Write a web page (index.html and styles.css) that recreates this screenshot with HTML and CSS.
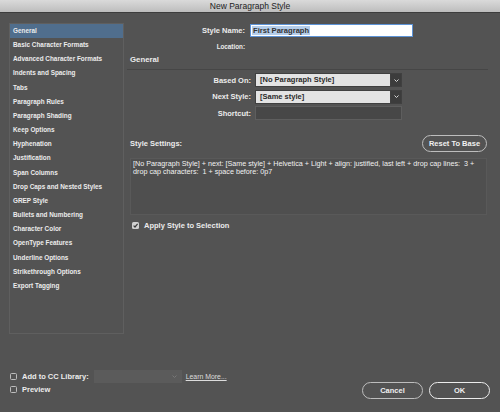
FILE: index.html
```html
<!DOCTYPE html>
<html lang="en">
<head>
  <meta charset="UTF-8">
  <title>New Paragraph Style</title>
  <link rel="stylesheet" href="styles.css">
</head>
<body>

<div class="window">
  <div class="titlebar">New Paragraph Style</div>

  <div class="top">
    <ul class="nav">
      <li class="active">General</li>
      <li>Basic Character Formats</li>
      <li>Advanced Character Formats</li>
      <li>Indents and Spacing</li>
      <li>Tabs</li>
      <li>Paragraph Rules</li>
      <li>Paragraph Shading</li>
      <li>Keep Options</li>
      <li>Hyphenation</li>
      <li>Justification</li>
      <li>Span Columns</li>
      <li>Drop Caps and Nested Styles</li>
      <li>GREP Style</li>
      <li>Bullets and Numbering</li>
      <li>Character Color</li>
      <li>OpenType Features</li>
      <li>Underline Options</li>
      <li>Strikethrough Options</li>
      <li>Export Tagging</li>
    </ul>

    <div class="pane">
      <div class="form form-name">
        <label>Style Name:</label>
        <div class="text-input focused"><span class="selection">First Paragraph</span></div>
        <label class="small">Location:</label>
        <span></span>
      </div>

      <div class="section-title">General</div>
      <div class="rule"></div>

      <div class="form form-general">
        <label>Based On:</label>
        <div class="select">
          <span class="value">[No Paragraph Style]</span>
          <span class="arrow"><svg width="5" height="3" viewBox="0 0 5 3"><path d="M0.5 0.5 L2.5 2.5 L4.5 0.5" stroke="#d8d8d8" stroke-width="1" fill="none"/></svg></span>
        </div>
        <label>Next Style:</label>
        <div class="select">
          <span class="value">[Same style]</span>
          <span class="arrow"><svg width="5" height="3" viewBox="0 0 5 3"><path d="M0.5 0.5 L2.5 2.5 L4.5 0.5" stroke="#d8d8d8" stroke-width="1" fill="none"/></svg></span>
        </div>
        <label>Shortcut:</label>
        <div class="dark-input"></div>
      </div>

      <div class="settings-head">
        <span class="label">Style Settings:</span>
        <button class="pill reset">Reset To Base</button>
      </div>
      <div class="settings-box">
        [No Paragraph Style] + next: [Same style] + Helvetica + Light + align: justified, last left + drop cap lines:&nbsp; 3 +<br>
        drop cap characters:&nbsp; 1 + space before: 0p7
      </div>

      <div class="check-row apply">
        <span class="box checked"><svg width="7" height="7" viewBox="0 0 7 7"><path d="M1.6 3.6 L3 5 L5.6 1.8" stroke="#3a3a3a" stroke-width="1.2" fill="none"/></svg></span>
        <span>Apply Style to Selection</span>
      </div>
    </div>
  </div>

  <div class="footer">
    <div class="footer-left">
      <div class="check-row">
        <span class="box"></span>
        <span>Add to CC Library:</span>
        <div class="lib-select"><svg width="5" height="3" viewBox="0 0 5 3"><path d="M0.5 0.5 L2.5 2.5 L4.5 0.5" stroke="#777" stroke-width="1" fill="none"/></svg></div>
        <a class="learn">Learn More...</a>
      </div>
      <div class="check-row">
        <span class="box"></span>
        <span>Preview</span>
      </div>
    </div>
    <div class="buttons">
      <button class="pill">Cancel</button>
      <button class="pill default">OK</button>
    </div>
  </div>
</div>

</body>
</html>
```

FILE: styles.css
```css
* {
  margin: 0;
  padding: 0;
  box-sizing: border-box;
}
body {
  width: 500px;
  height: 412px;
  overflow: hidden;
  background-color: #535353;
  color: #ececec;
  font-family: "Liberation Sans", Arial, sans-serif;
  font-size: 7.5px;
  font-weight: bold;
}
.window {
  height: 412px;
  display: flex;
  flex-direction: column;
}
.titlebar {
  height: 13px;
  line-height: 12px;
  text-align: center;
  font-size: 8.5px;
  font-weight: normal;
  color: #222;
  background: linear-gradient(#dadada, #bdbdbd);
  border-bottom: 1px solid #3d3d3d;
}
.top {
  display: flex;
  gap: 3px;
  padding: 10px 0 0 9px;
}

/* left list */
.nav {
  list-style: none;
  width: 115px;
  height: 311px;
  border: 1px solid #5f5f5f;
  font-size: 6.4px;
}
.nav li {
  height: 14.17px;
  line-height: 14.17px;
  padding-left: 3px;
  white-space: nowrap;
}
.nav li.active {
  background-color: #506e8d;
}

/* right pane */
.pane {
  width: 361px;
  display: flex;
  flex-direction: column;
}
.form {
  display: grid;
  align-items: center;
}
.form label {
  text-align: right;
}
.form-name {
  margin-top: 1px;
  grid-template-columns: 118px 163px;
  grid-template-rows: 13px 12px;
  column-gap: 5px;
  row-gap: 3px;
}
.form-name .small {
  font-size: 6.3px;
}
.text-input {
  height: 13px;
  background-color: #fff;
  border: 1px solid #5d93d6;
  padding: 0 1px;
  display: flex;
  align-items: center;
}
.selection {
  background-color: #b4cdea;
  color: #333;
  font-size: 7.6px;
  line-height: 9px;
  padding: 0 1px;
}
.section-title {
  margin-top: 2px;
  height: 12px;
  line-height: 12px;
  padding-left: 3px;
  font-size: 7.8px;
}
.rule {
  margin-top: 3px;
  height: 1px;
  background-color: #464646;
}
.form-general {
  margin-top: 3px;
  grid-template-columns: 124px 147px;
  grid-auto-rows: 14px;
  column-gap: 4px;
  row-gap: 2.5px;
}
.select {
  height: 100%;
  display: flex;
  gap: 1px;
  border: 1px solid #404040;
  background-color: #404040;
}
.select .value {
  flex: 1;
  background-color: #e3e3e3;
  color: #2a2a2a;
  padding-left: 4px;
  line-height: 12px;
}
.select .arrow {
  width: 10px;
  display: flex;
  align-items: center;
  justify-content: center;
  background-color: #3c3c3c;
}
.dark-input {
  height: 100%;
  background-color: #474747;
  border: 1px solid #5e5e5e;
}
.settings-head {
  margin-top: 15px;
  display: flex;
  justify-content: space-between;
  align-items: center;
  padding: 0 1px 0 3px;
}
.pill {
  height: 17px;
  width: 61px;
  border: 1.5px solid #bdbdbd;
  border-radius: 9px;
  background: transparent;
  color: #f0f0f0;
  font-family: "Liberation Sans", Arial, sans-serif;
  font-size: 7.5px;
  font-weight: bold;
}
.pill.reset {
  width: 65px;
}
.pill.default {
  border-color: #ececec;
}
.settings-box {
  margin: 6px 1px 0 3px;
  height: 57px;
  padding: 1px 2px;
  border: 1px solid #595959;
  background-color: #4f4f4f;
  font-size: 7.2px;
  font-weight: normal;
  line-height: 8.3px;
  color: #f2f2f2;
}
.check-row {
  height: 13px;
  display: flex;
  align-items: center;
  gap: 5px;
}
.check-row.apply {
  margin-top: 4px;
  padding-left: 5px;
}
.box {
  width: 7px;
  height: 7px;
  border: 1px solid #bcbcbc;
  border-radius: 1.5px;
  display: flex;
}
.box.checked {
  border: none;
  background-color: #cfcfcf;
}

/* bottom */
.footer {
  margin-top: auto;
  display: flex;
  justify-content: space-between;
  align-items: flex-end;
  padding: 0 10px 13px 10px;
}
.footer-left {
  margin-bottom: 3px;
}
.lib-select {
  width: 88px;
  height: 13px;
  background-color: #5b5b5b;
  display: flex;
  align-items: center;
  justify-content: flex-end;
  padding-right: 5px;
}
.learn {
  margin-left: -1px;
  font-size: 6.9px;
  font-weight: normal;
  color: #dcdcdc;
  text-decoration: underline;
}
.buttons {
  display: flex;
  gap: 6px;
}
```
